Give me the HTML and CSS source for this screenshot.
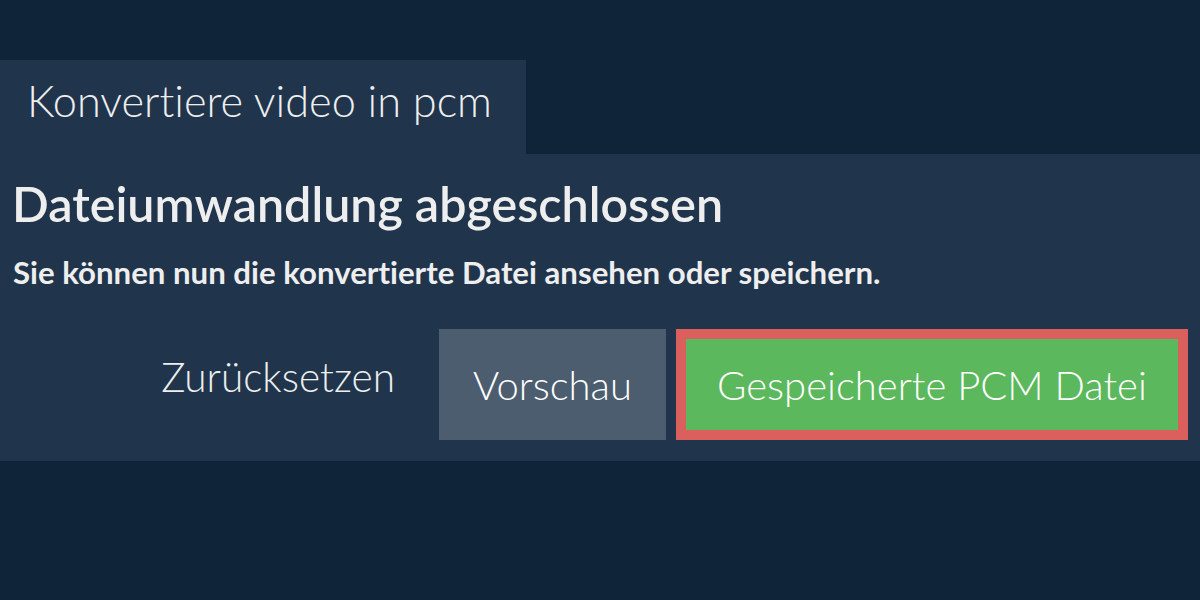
FILE: index.html
```html
<!DOCTYPE html>
<html lang="de">
<head>
<meta charset="utf-8">
<link rel="stylesheet" href="styles.css">
</head>
<body>
<div class="page">
  <div class="tab">Konvertiere video in pcm</div>
  <div class="panel">
    <h1 class="title">Dateiumwandlung abgeschlossen</h1>
    <p class="subtitle">Sie können nun die konvertierte Datei ansehen oder speichern.</p>
    <div class="actions">
      <a class="btn btn-link">Zurücksetzen</a>
      <a class="btn btn-preview">Vorschau</a>
      <a class="btn btn-save">Gespeicherte PCM Datei</a>
    </div>
  </div>
</div>
</body>
</html>
```

FILE: styles.css
```css
html, body {
  margin: 0;
  padding: 0;
  background: #0f2339;
  font-family: Lato, "Open Sans", sans-serif;
  font-variant-ligatures: none;
  color: #eeeeee;
}
.page {
  padding-top: 60px;
}
.tab {
  display: inline-block;
  width: 526px;
  box-sizing: border-box;
  height: 94px;
  padding: 0 0 0 27px;
  background: #20354c;
  font-weight: 300;
  font-size: 43.3px;
  line-height: 80px;
  vertical-align: top;
}
.panel {
  background: #20354c;
  height: 307px;
  box-sizing: border-box;
  padding: 20px 12px 0 12px;
}
.title {
  margin: 0;
  font-size: 48.4px;
  font-weight: 600;
  line-height: 58px;
}
.subtitle {
  margin: 20px 0 0;
  padding-left: 1px;
  font-size: 31.2px;
  font-weight: 700;
  line-height: 40px;
}
.actions {
  display: flex;
  justify-content: flex-end;
  align-items: center;
  gap: 10px;
  margin-top: 37px;
}
.btn {
  font-weight: 300;
  font-size: 40px;
  display: flex;
  align-items: center;
  justify-content: center;
  box-sizing: border-box;
  height: 111px;
}
.btn-link {
  font-size: 40.6px;
  padding: 0 34px 16px 0;
}
.btn-preview {
  width: 227px;
  background: #4b5d6e;
  color: #ffffff;
}
.btn-save {
  width: 512px;
  background: #5cb85c;
  border: 10px solid #db5f5c;
  color: #ffffff;
}
```
